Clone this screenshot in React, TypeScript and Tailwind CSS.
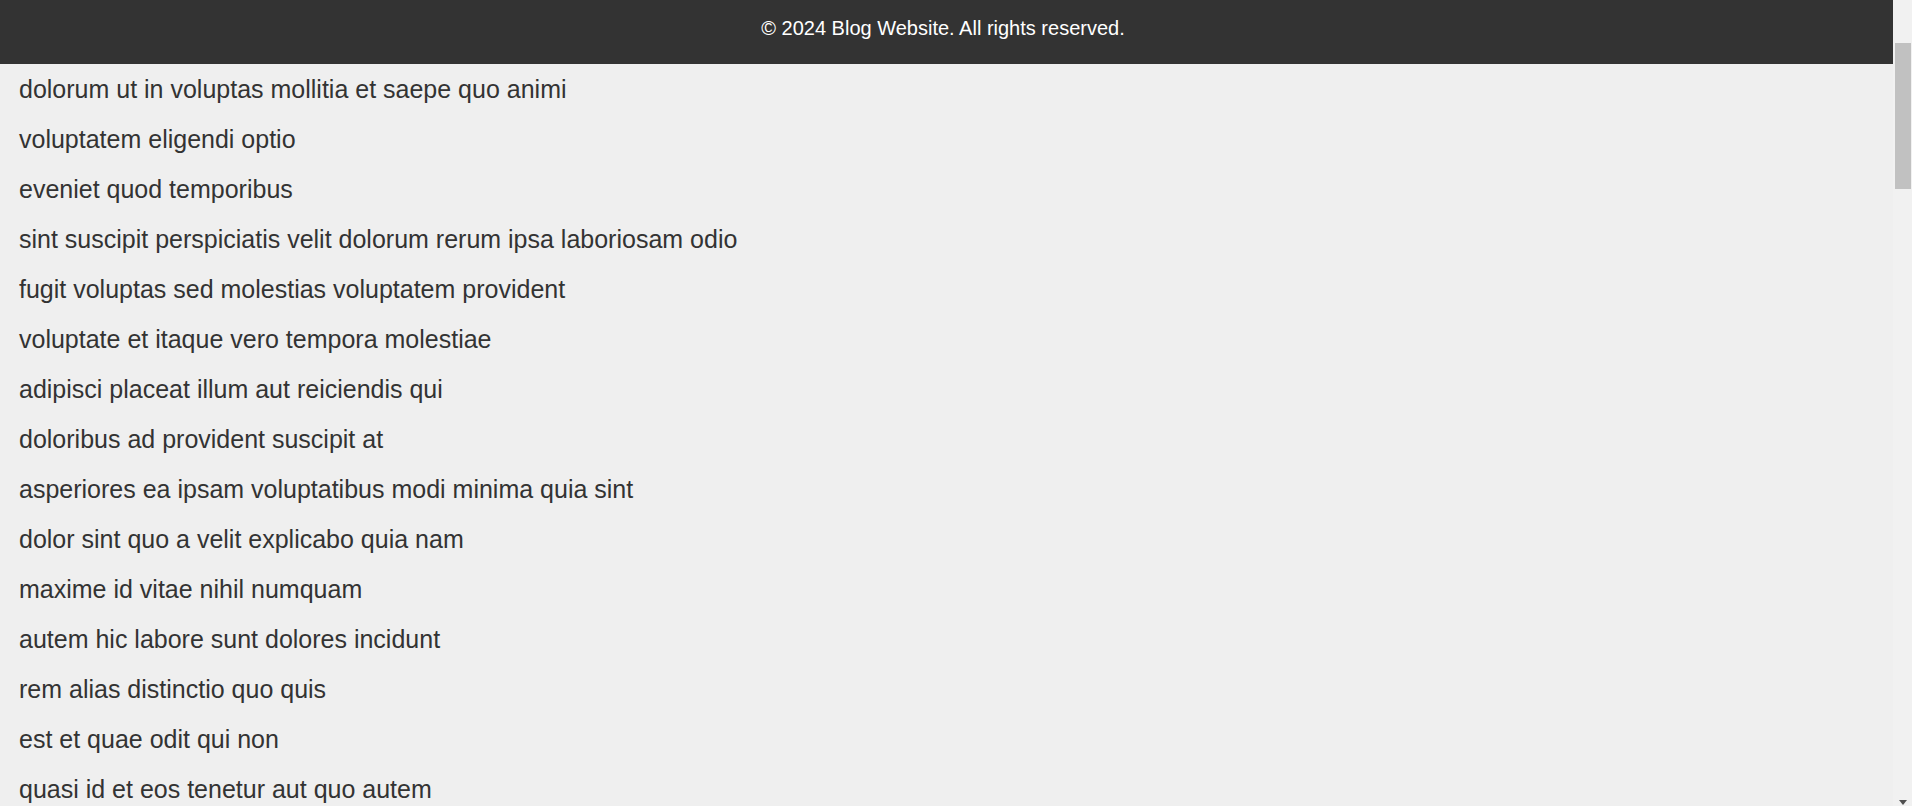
const posts = [
  "dolorum ut in voluptas mollitia et saepe quo animi",
  "voluptatem eligendi optio",
  "eveniet quod temporibus",
  "sint suscipit perspiciatis velit dolorum rerum ipsa laboriosam odio",
  "fugit voluptas sed molestias voluptatem provident",
  "voluptate et itaque vero tempora molestiae",
  "adipisci placeat illum aut reiciendis qui",
  "doloribus ad provident suscipit at",
  "asperiores ea ipsam voluptatibus modi minima quia sint",
  "dolor sint quo a velit explicabo quia nam",
  "maxime id vitae nihil numquam",
  "autem hic labore sunt dolores incidunt",
  "rem alias distinctio quo quis",
  "est et quae odit qui non",
  "quasi id et eos tenetur aut quo autem",
  "delectus ullam et corporis nulla voluptas sequi",
  "iusto eius quod necessitatibus culpa ea",
  "a quo magni similique perferendis",
];

export default function App() {
  return (
    <div className="flex h-screen overflow-hidden bg-[#efefef] font-['Liberation_Sans',Arial,sans-serif]">
      <div className="min-w-0 flex-1">
        <footer className="h-16 bg-[#333333] pt-4 pr-[7px] text-center text-[20px] leading-6 text-white">
          © 2024 Blog Website. All rights reserved.
        </footer>
        <ul>
          {posts.map((title) => (
            <li key={title} className="whitespace-nowrap px-[19px] py-3 text-[25px] leading-[26px] text-[#333333]">
              {title}
            </li>
          ))}
        </ul>
      </div>
      {/* scrollbar */}
      <div className="flex w-[19px] shrink-0 flex-col bg-[#f1f1f1]">
        <div className="mt-[43px] ml-[2px] mr-[1px] h-[146px] bg-[#c1c1c1]" />
        <div className="mt-auto mb-[1px] self-center border-x-4 border-t-[5px] border-x-transparent border-t-[#505050]" />
      </div>
    </div>
  );
}
